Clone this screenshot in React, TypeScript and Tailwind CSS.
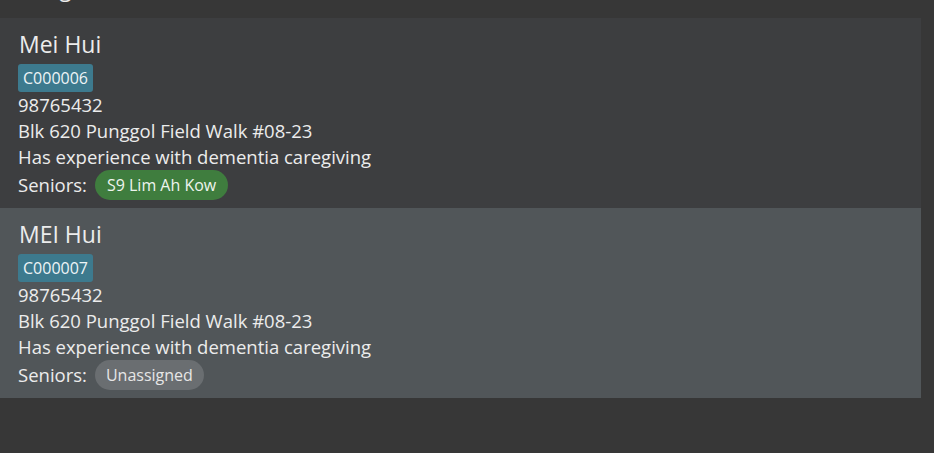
import React from "react";

type Person = {
  name: string;
  id: string;
  phone: string;
  address: string;
  note: string;
  senior: string | null;
  selected: boolean;
};

const people: Person[] = [
  {
    name: "Mei Hui",
    id: "C000006",
    phone: "98765432",
    address: "Blk 620 Punggol Field Walk #08-23",
    note: "Has experience with dementia caregiving",
    senior: "S9 Lim Ah Kow",
    selected: false,
  },
  {
    name: "MEI Hui",
    id: "C000007",
    phone: "98765432",
    address: "Blk 620 Punggol Field Walk #08-23",
    note: "Has experience with dementia caregiving",
    senior: null,
    selected: true,
  },
];

function Card({ p }: { p: Person }) {
  return (
    <div
      className={
        (p.selected ? "bg-[#515659]" : "bg-[#3d3e40]") +
        " h-[190px] pt-[10px] pl-[18px] flex flex-col items-start text-[#ececec]"
      }
    >
      <div className="text-[23px] leading-[32px] pl-[1px]">{p.name}</div>
      <div className="mt-[4px] h-[28px] px-[5px] rounded-[3px] bg-[#3d7a8e] text-[16px] leading-[28px] text-[#eef4f6]">
        {p.id}
      </div>
      <div className="text-[18.5px] leading-[26px]">{p.phone}</div>
      <div className="text-[18.5px] leading-[26px]">{p.address}</div>
      <div className="text-[18.5px] leading-[26px]">{p.note}</div>
      <div className="flex items-center h-[30px] gap-[8px]">
        <span className="text-[18.5px] leading-[26px]">Seniors:</span>
        {p.senior ? (
          <span className="h-[30px] px-[12px] rounded-full bg-[#3f7d3e] text-[16px] leading-[30px] text-[#eef4ee]">
            {p.senior}
          </span>
        ) : (
          <span className="h-[30px] px-[11px] rounded-full bg-[#6a6e71] text-[16px] leading-[30px] text-[#e6e6e6]">
            Unassigned
          </span>
        )}
      </div>
    </div>
  );
}

export default function App() {
  return (
    <div
      className="h-screen w-full bg-[#373737] overflow-hidden"
      style={{ fontFamily: "'Open Sans', 'Noto Sans', sans-serif" }}
    >
      <div className="h-[18px] overflow-hidden relative">
        <div className="text-[22px] leading-[22px] text-[#ececec] pl-[12px] -mt-[23px]">
          Caregivers
        </div>
      </div>
      <div className="w-[921px] flex flex-col">
        {people.map((p) => (
          <Card key={p.id} p={p} />
        ))}
      </div>
    </div>
  );
}
